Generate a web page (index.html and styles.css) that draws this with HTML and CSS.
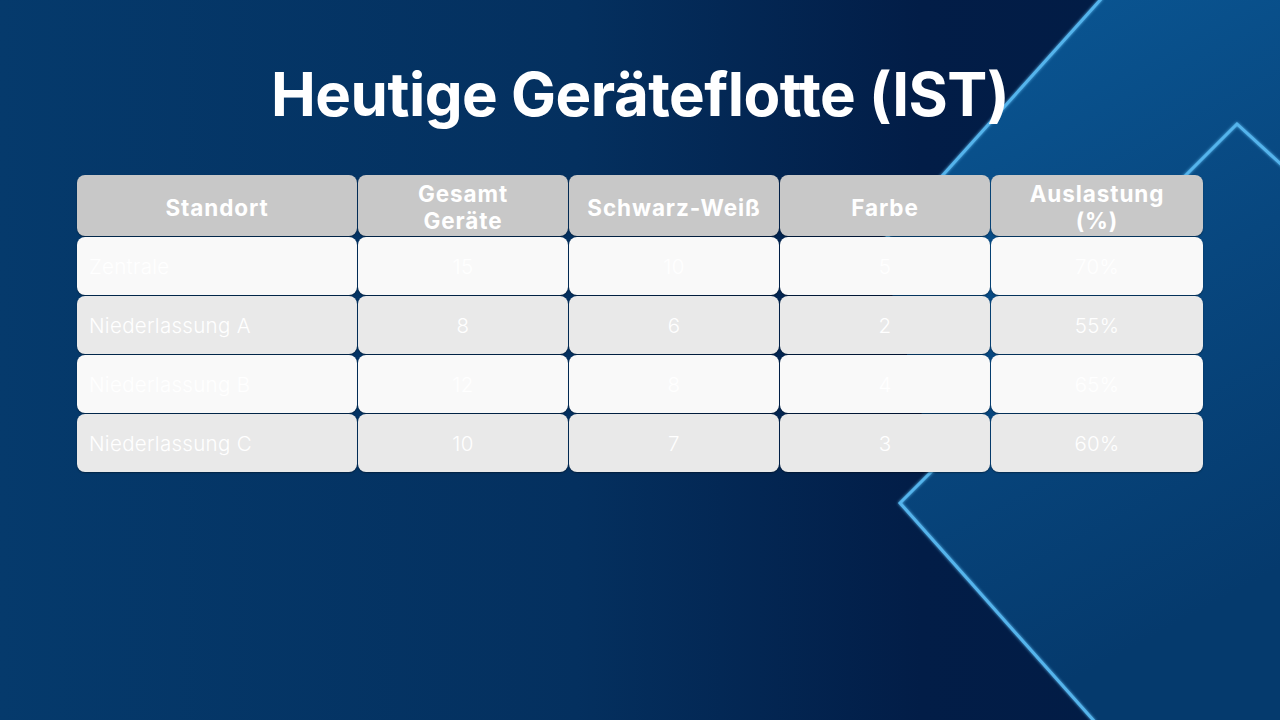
FILE: index.html
```html
<!DOCTYPE html>
<html lang="de">
<head>
<meta charset="utf-8">
<title>Heutige Geräteflotte (IST)</title>
<link rel="stylesheet" href="styles.css">
</head>
<body>
<div class="slide">
  <svg class="backdrop" width="1280" height="720" viewBox="0 0 1280 720" aria-hidden="true">
    <defs>
      <linearGradient id="bgDark" x1="0" y1="0" x2="1" y2="0">
        <stop offset="0" stop-color="#053a6c"/>
        <stop offset="0.45" stop-color="#04305f"/>
        <stop offset="0.72" stop-color="#021d47"/>
        <stop offset="1" stop-color="#021b44"/>
      </linearGradient>
      <linearGradient id="bgLight" x1="0" y1="0" x2="0.3" y2="1">
        <stop offset="0" stop-color="#0a5896"/>
        <stop offset="0.55" stop-color="#08477f"/>
        <stop offset="1" stop-color="#053a6d"/>
      </linearGradient>
      <filter id="glow" x="-10%" y="-10%" width="120%" height="120%">
        <feGaussianBlur stdDeviation="1.6" result="b"/>
        <feMerge><feMergeNode in="b"/><feMergeNode in="SourceGraphic"/></feMerge>
      </filter>
    </defs>
    <rect x="0" y="0" width="1280" height="720" fill="url(#bgDark)"/>
    <polygon points="1100,0 880,245 935,468 900,503 1093,720 1280,720 1280,0" fill="url(#bgLight)"/>
    <g fill="none" stroke="#55b4ec" stroke-width="3" filter="url(#glow)" stroke-linejoin="miter">
      <polyline points="1102,-2 880,245"/>
      <polyline points="940,463 900,503 1095,722"/>
      <polyline points="1180,181 1237,124 1284,167"/>
    </g>
  </svg>

  <main class="content">
    <h1 class="title">Heutige Geräteflotte (IST)</h1>

    <div class="table" role="table">
      <div class="cell head first" role="columnheader">Standort</div>
      <div class="cell head" role="columnheader">Gesamt<br>Geräte</div>
      <div class="cell head" role="columnheader">Schwarz-Weiß</div>
      <div class="cell head" role="columnheader">Farbe</div>
      <div class="cell head" role="columnheader">Auslastung<br>(%)</div>

      <div class="cell odd first">Zentrale</div>
      <div class="cell odd">15</div>
      <div class="cell odd">10</div>
      <div class="cell odd">5</div>
      <div class="cell odd">70%</div>

      <div class="cell even first">Niederlassung A</div>
      <div class="cell even">8</div>
      <div class="cell even">6</div>
      <div class="cell even">2</div>
      <div class="cell even">55%</div>

      <div class="cell odd first">Niederlassung B</div>
      <div class="cell odd">12</div>
      <div class="cell odd">8</div>
      <div class="cell odd">4</div>
      <div class="cell odd">65%</div>

      <div class="cell even first">Niederlassung C</div>
      <div class="cell even">10</div>
      <div class="cell even">7</div>
      <div class="cell even">3</div>
      <div class="cell even">60%</div>
    </div>
  </main>
</div>
</body>
</html>
```

FILE: styles.css
```css
html, body {
  margin: 0;
  padding: 0;
  background: #021d47;
}

.slide {
  position: relative;
  width: 1280px;
  height: 720px;
  overflow: hidden;
  font-family: "Inter", "Noto Sans", sans-serif;
}

.backdrop {
  position: absolute;
  left: 0;
  top: 0;
  z-index: 0;
  display: block;
}

.content {
  position: relative;
  z-index: 1;
  display: flex;
  flex-direction: column;
  align-items: center;
  padding-top: 56px;
}

.title {
  margin: 0;
  color: #ffffff;
  font-size: 60px;
  font-weight: 700;
  letter-spacing: -0.5px;
  line-height: 76px;
  text-align: center;
}

.table {
  margin-top: 43px;
  align-self: flex-start;
  margin-left: 77px;
  display: grid;
  grid-template-columns: 280px 210px 210px 210px 212px;
  grid-template-rows: 61px 58px 58px 58px 58px;
  gap: 1px;
}

.cell {
  display: flex;
  align-items: center;
  justify-content: center;
  text-align: center;
  border-radius: 8px;
  color: #ffffff;
  box-shadow: 0 1px 1.5px rgba(0, 0, 0, 0.35);
  font-size: 20.5px;
  font-weight: 300;
  letter-spacing: 0.3px;
}

.cell.head {
  background: #c8c8c8;
  font-size: 22.5px;
  font-weight: 700;
  letter-spacing: 0.9px;
  line-height: 27px;
  padding-top: 3px;
}

.cell.odd {
  background: #f9f9f9;
}

.cell.even {
  background: #e9e9e9;
}

.cell.first:not(.head) {
  justify-content: flex-start;
  padding-left: 12px;
  text-align: left;
}
```
